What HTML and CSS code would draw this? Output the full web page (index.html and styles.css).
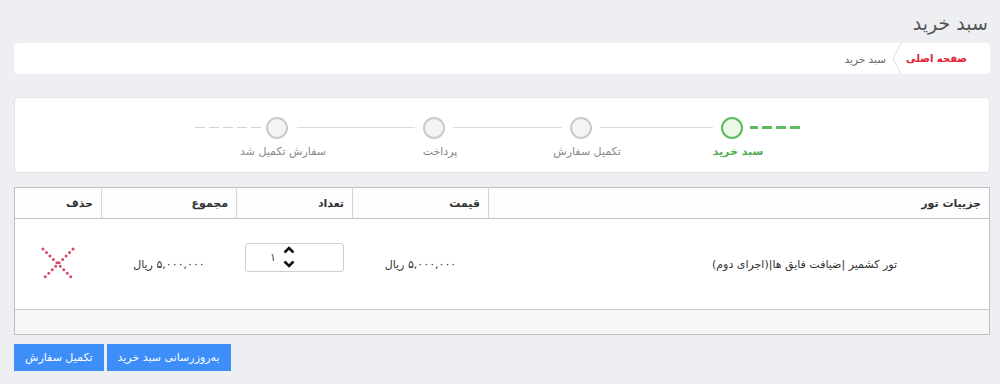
FILE: index.html
```html
<!DOCTYPE html>
<html lang="fa" dir="rtl">
<head>
<meta charset="utf-8">
<link rel="stylesheet" href="styles.css">
</head>
<body>
<div class="page">
  <h1 class="title">سبد خرید</h1>
  <div class="crumbs">
    <a class="crumb-home">صفحه اصلی</a>
    <svg class="crumb-sep" width="10" height="31" viewBox="0 0 10 31"><polyline points="9,0 1,15.5 9,31" fill="none" stroke="#dcdcdf" stroke-width="1"/></svg>
    <span class="crumb-cur">سبد خرید</span>
  </div>

  <div class="steps">
    <div class="dash dash-green"></div>
    <div class="step active">
      <div class="circle"></div>
      <div class="label">سبد خرید</div>
    </div>
    <div class="line l1"></div>
    <div class="step">
      <div class="circle"></div>
      <div class="label">تکمیل سفارش</div>
    </div>
    <div class="line l2"></div>
    <div class="step">
      <div class="circle"></div>
      <div class="label">پرداخت</div>
    </div>
    <div class="line l3"></div>
    <div class="step">
      <div class="circle"></div>
      <div class="label">سفارش تکمیل شد</div>
    </div>
    <div class="dash dash-gray"></div>
  </div>

  <table class="cart">
    <thead>
      <tr class="head">
        <th class="c-name">جزییات تور</th>
        <th class="c-price">قیمت</th>
        <th class="c-qty">تعداد</th>
        <th class="c-sum">مجموع</th>
        <th class="c-del">حذف</th>
      </tr>
    </thead>
    <tbody>
      <tr class="item">
        <td class="name">تور کشمیر |ضیافت فایق ها|(اجرای دوم)</td>
        <td class="center">۵,۰۰۰,۰۰۰ ریال</td>
        <td class="center">
          <div class="qty">
            <span class="qty-val">۱</span>
            <span class="qty-arrows">
              <svg width="12" height="8" viewBox="0 0 12 8"><polyline points="1.5,6.5 6,2 10.5,6.5" fill="none" stroke="#111" stroke-width="2.6"/></svg>
              <svg width="12" height="8" viewBox="0 0 12 8"><polyline points="1.5,1.5 6,6 10.5,1.5" fill="none" stroke="#111" stroke-width="2.6"/></svg>
            </span>
          </div>
        </td>
        <td class="center">۵,۰۰۰,۰۰۰ ریال</td>
        <td class="center">
          <svg class="del" width="36" height="36" viewBox="0 0 36 36">
            <line x1="3" y1="3" x2="33" y2="33" stroke="#d24b63" stroke-width="3" stroke-linecap="round" stroke-dasharray="0 4.9"/>
            <line x1="33" y1="3" x2="3" y2="33" stroke="#d24b63" stroke-width="3" stroke-linecap="round" stroke-dasharray="0 4.9"/>
          </svg>
        </td>
      </tr>
      <tr class="foot">
        <td colspan="5"></td>
      </tr>
    </tbody>
  </table>

  <div class="actions">
    <button class="btn">به‌روزرسانی سبد خرید</button>
    <button class="btn">تکمیل سفارش</button>
  </div>
</div>
</body>
</html>
```

FILE: styles.css
```css
html, body {
  margin: 0;
  padding: 0;
  background: #eeeff2;
}
body {
  font-family: "DejaVu Sans", sans-serif;
  color: #444;
  font-size: 12px;
}
.page {
  padding: 0 10px 0 14px;
}
.title {
  margin: 0;
  padding: 10px 2px 0 0;
  height: 33px;
  font-size: 19px;
  font-weight: normal;
  color: #555;
  line-height: 26px;
}
.crumbs {
  background: #fff;
  border-radius: 4px;
  height: 31px;
  display: flex;
  align-items: center;
  padding-right: 23px;
}
.crumb-home {
  color: #e3202e;
  font-weight: bold;
  font-size: 10px;
}
.crumb-sep {
  margin: 0 4px 0 6px;
}
.crumb-cur {
  color: #666;
  font-size: 10.5px;
}
.steps {
  margin-top: 23px;
  height: 76px;
  background: #fff;
  border: 1px solid #e3e4e8;
  border-radius: 4px;
  display: flex;
  align-items: flex-start;
  padding-right: 189px;
  padding-top: 19px;
  box-sizing: border-box;
}
.step {
  width: 22px;
  display: flex;
  flex-direction: column;
  align-items: center;
}
.circle {
  width: 22px;
  height: 22px;
  box-sizing: border-box;
  border-radius: 50%;
  border: 2.5px solid #c9c9ce;
  background: #f4f4f7;
}
.label {
  margin-top: 6px;
  white-space: nowrap;
  font-size: 11px;
  color: #888;
  padding-left: 12px;
}
.step.active .circle {
  border-color: #5cbb5c;
  background: #eaf8ea;
}
.step.active .label {
  color: #4cae4c;
  font-weight: bold;
}
.line {
  height: 1px;
  background: #dcdce0;
  margin: 10px 8px 0 8px;
}
.l1 { width: 113px; }
.l2 { width: 109px; }
.l3 { width: 118px; margin-left: 9px; }
.dash {
  height: 0;
  margin-top: 10px;
}
.dash-green {
  width: 50px;
  height: 3px;
  margin-top: 9px;
  margin-left: 7px;
  background: repeating-linear-gradient(to left, #5cbb5c 0 10px, transparent 10px 14px);
}
.dash-gray {
  width: 66px;
  margin-right: 5px;
  height: 1px;
  background: repeating-linear-gradient(to left, #d4d4d8 0 10px, transparent 10px 14px);
}
.cart {
  margin-top: 14px;
  width: 100%;
  border-collapse: collapse;
  background: #fff;
  border: 1px solid #bfbfc3;
}
.head {
  height: 31px;
}
.cart th {
  box-sizing: border-box;
  text-align: right;
  padding: 0 8px;
  font-size: 11px;
  font-weight: bold;
  color: #333;
  background: #fdfdfd;
  border-left: 1px solid #d6d6d9;
  border-bottom: 1px solid #c3c3c6;
}
.cart th:last-child { border-left: none; }
.c-price { width: 136px; }
.c-qty { width: 116px; }
.c-sum { width: 135px; }
.c-del { width: 87px; }
.item {
  height: 91px;
}
.item td {
  padding: 0;
  vertical-align: middle;
  font-size: 11px;
  color: #333;
}
.item td.name {
  text-align: right;
  padding-right: 92px;
}
.item td.center {
  text-align: center;
}
.qty {
  width: 99px;
  height: 29px;
  margin: 0 auto 14px;
  box-sizing: border-box;
  border: 1px solid #cfcfd3;
  border-radius: 3px;
  display: flex;
  align-items: center;
  justify-content: center;
  padding-right: 24px;
  direction: ltr;
}
.qty-val {
  font-size: 11px;
  color: #444;
  margin-right: 7px;
}
.qty-arrows {
  display: flex;
  flex-direction: column;
  gap: 6px;
}
.qty-arrows svg { display: block; }
.del { display: block; margin: 0 auto; }
.foot {
  height: 25px;
}
.foot td {
  padding: 0;
  background: #f6f6f7;
  border-top: 1px solid #c9c9cc;
}
.actions {
  margin-top: 9px;
  display: flex;
  justify-content: flex-end;
  gap: 3px;
}
.btn {
  font-family: "DejaVu Sans", sans-serif;
  height: 27px;
  border: none;
  background: #3d8ef8;
  color: #fff;
  font-size: 11px;
  padding: 0 11px;
  cursor: pointer;
}
```
